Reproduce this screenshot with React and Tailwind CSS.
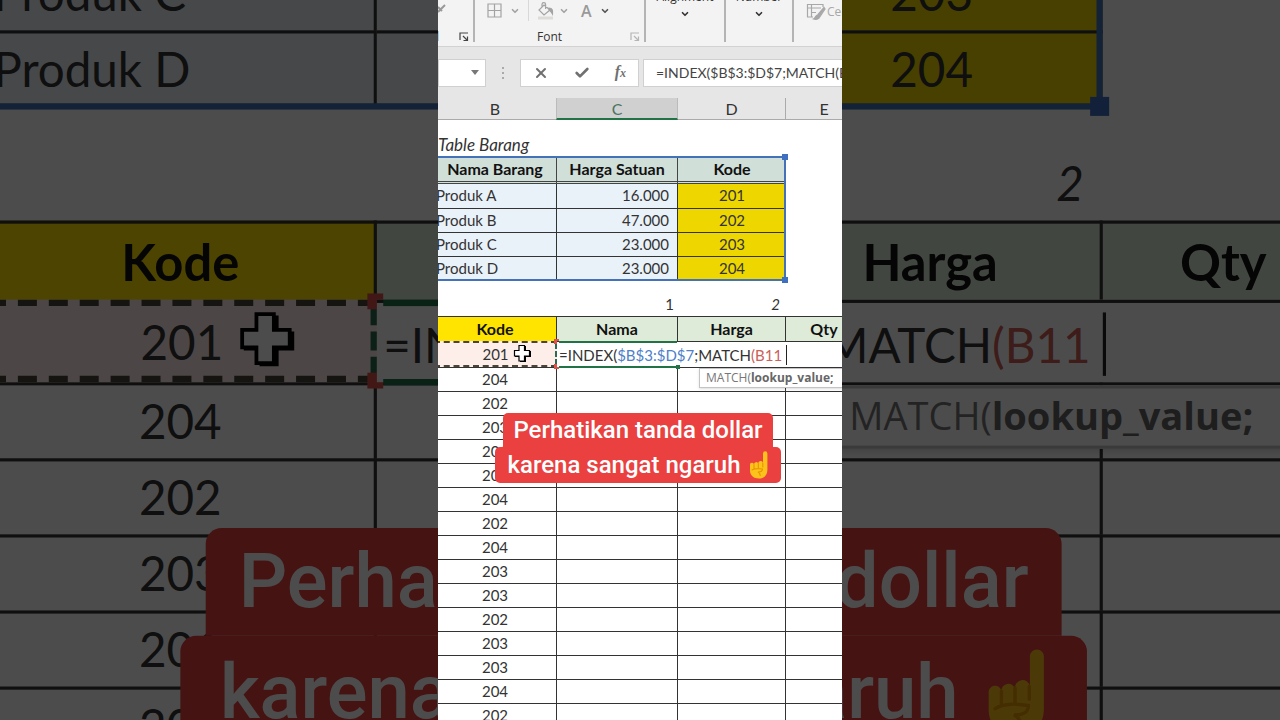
import React from 'react';
import { ChevronDown, Check, X } from 'lucide-react';

const products = [
    { name: 'Produk A', price: '16.000', code: '201' },
    { name: 'Produk B', price: '47.000', code: '202' },
    { name: 'Produk C', price: '23.000', code: '203' },
    { name: 'Produk D', price: '23.000', code: '204' },
];

const orderCodes = ['204', '202', '203', '201', '202', '204', '202', '204', '203', '203', '202', '203', '203', '204', '202'];

const Columns = () => (
    <colgroup>
        <col className="w-[123px]" />
        <col className="w-[121px]" />
        <col className="w-[108px]" />
        <col className="w-[76px]" />
    </colgroup>
);

// --- Icons ---
const Launcher = ({ className }) => (
    <svg viewBox="0 0 10 10" className={`w-[10px] h-[10px] ${className}`} fill="none" stroke="currentColor">
        <path d="M1 8V1h8M4 4l4 4M8.5 4.5v4h-4" strokeWidth="1.2" />
    </svg>
);

const BordersIcon = () => (
    <svg viewBox="0 0 15 15" className="w-[15px] h-[15px]" fill="none" stroke="#a3a3a3" strokeWidth="1.2">
        <path d="M1 1h13v13H1zM7.5 1v13M1 7.5h13" />
    </svg>
);

const BucketIcon = () => (
    <svg viewBox="0 0 18 18" className="w-[18px] h-[18px]" fill="none" stroke="#a3a3a3" strokeWidth="1.2">
        <path d="M7 3l6 5-6 5-5-5zM5 6V2.5a1.8 1.8 0 0 1 3.6 0V7" />
        <path d="M12 6c3 0 4 2 3.5 6-1-2-1.5-3-3.5-4z" fill="#a3a3a3" />
        <path d="M1 16h15" stroke="#dedcd8" strokeWidth="3" />
    </svg>
);

const CellStylesIcon = () => (
    <svg viewBox="0 0 20 18" className="w-[20px] h-[18px]" fill="none" stroke="#a8a8a8" strokeWidth="1.2">
        <path d="M17 4V1.5H1.5V14H7M1.5 5H15M5.5 1.5V14M5.5 9.5H10" />
        <path d="M18 4.5l-6 7 2 2 5-7.5zM11.5 12c-2 0-1.5 3-4 4 3 1 6 0 6-2.5z" fill="#a8a8a8" />
    </svg>
);

const PlusCursor = () => (
    <svg viewBox="0 0 18 19" className="w-[18px] h-[19px]">
        <path d="M7 2h6v5h5v6h-5v5H7v-5H2V7h5z" fill="#000" />
        <path d="M6 1.5h5.5v5h5V12h-5v5H6v-5H1.5V6.5H6z" fill="#fff" stroke="#000" strokeWidth="1.2" />
    </svg>
);

const PointingUp = () => (
    <svg viewBox="0 0 20 28" className="w-[20px] h-[28px]" role="img" aria-label="jari menunjuk ke atas">
        <path d="M14 2.5a2.2 2.2 0 0 1 4.4 0V19c0 5-3 8.5-8.5 8.5S1 24 1 19.5V14a2 2 0 0 1 4-.5 2.2 2.2 0 0 1 4.3-.8A2.3 2.3 0 0 1 14 12z" fill="#fcc21b" />
        <path d="M5 13.5V18M9.3 12.5V17M13.8 12v4M3 19c3-2 7-1.5 10.500-1 0 2.5-2 3-4.5 3 1.500.8 2.2 2 2.2 3.5" fill="none" stroke="#e59600" strokeWidth="1.1" strokeLinecap="round" />
    </svg>
);

// --- Top of the window ---
const Ribbon = () => (
    <div className="flex h-[47px] bg-[#f3f3f3] border-b border-[#d2d2d2] font-['Open_Sans',sans-serif] text-[12px] leading-4 text-[#333]">
        <div className="relative w-[37px] h-[42px] shrink-0 border-r-2 border-[#b4b4b4]">
            <svg viewBox="0 0 8 10" className="w-2 h-[10px] mt-1" stroke="#999" strokeWidth="2">
                <path d="M0 8l7-7M0 3l4 4" />
            </svg>
            <span className="absolute right-[34px] bottom-[-3px]">Clipboard</span>
            <button type="button" aria-label="Clipboard settings" className="absolute right-1 bottom-0"><Launcher className="text-[#444]" /></button>
        </div>
        <div className="relative w-[171px] h-[42px] shrink-0 border-r-2 border-[#b4b4b4]">
            <div className="flex items-center h-[21px] pl-3">
                <button type="button" aria-label="Borders" className="flex items-center gap-2">
                    <BordersIcon /><ChevronDown className="w-[10px] h-[10px] text-[#a3a3a3]" strokeWidth={4} />
                </button>
                <div className="w-px h-full ml-2 mr-2 bg-[#d8d8d8]" />
                <button type="button" aria-label="Fill colour" className="flex items-center gap-1">
                    <BucketIcon /><ChevronDown className="w-[10px] h-[10px] text-[#a3a3a3]" strokeWidth={4} />
                </button>
                <button type="button" aria-label="Font colour" className="flex items-center gap-2 ml-3 text-[16px] font-semibold text-[#999]">
                    A<ChevronDown className="w-[10px] h-[10px] text-[#555]" strokeWidth={4} />
                </button>
            </div>
            <p className="pt-2 pr-5 text-center">Font</p>
            <button type="button" aria-label="Font settings" className="absolute right-1 bottom-0"><Launcher className="text-[#b5b5b5]" /></button>
        </div>
        <button type="button" className="flex flex-col items-center w-20 h-[42px] shrink-0 border-r-2 border-[#b4b4b4]">
            <span className="-mt-[11px]">Alignment</span>
            <ChevronDown className="w-[10px] h-[10px] mt-1" strokeWidth={4} />
        </button>
        <button type="button" className="flex flex-col items-center w-[68px] h-[42px] shrink-0 border-r-2 border-[#b4b4b4]">
            <span className="-mt-[11px]">Number</span>
            <ChevronDown className="w-[10px] h-[10px] mt-1" strokeWidth={4} />
        </button>
        <button type="button" className="flex items-center gap-px h-6 pl-3 whitespace-nowrap text-[#a8a8a8]">
            <CellStylesIcon />Cell Styles
        </button>
    </div>
);

const FormulaBar = () => (
    <div className="flex items-center h-[51px] bg-[#e6e6e6]">
        <button type="button" aria-label="Name box" className="flex items-center justify-end w-12 h-7 shrink-0 pr-[6px] bg-white border border-[#d0d0d0]">
            <span className="border-x-4 border-t-[5px] border-x-transparent border-t-[#777]" />
        </button>
        <div className="flex flex-col items-center gap-[3px] w-[34px] shrink-0">
            <span className="w-[2px] h-[2px] bg-[#aaa]" />
            <span className="w-[2px] h-[2px] bg-[#aaa]" />
            <span className="w-[2px] h-[2px] bg-[#aaa]" />
        </div>
        <div className="flex items-center justify-between w-[119px] h-7 shrink-0 px-3 bg-white border border-[#d0d0d0] text-[#707070]">
            <button type="button" aria-label="Cancel"><X className="w-4 h-4" strokeWidth={3} /></button>
            <button type="button" aria-label="Enter"><Check className="w-4 h-4" strokeWidth={4} /></button>
            <button type="button" aria-label="Insert function" className="font-['Liberation_Serif',serif] text-[16px] leading-4 italic font-bold">f<span className="text-[12px]">x</span></button>
        </div>
        <input
            aria-label="Formula"
            readOnly
            value="=INDEX($B$3:$D$7;MATCH(B11"
            className="w-[240px] h-7 shrink-0 ml-1 pl-3 bg-white border border-[#d0d0d0] text-[14px] text-[#444] outline-none"
        />
    </div>
);

const ColumnHeaders = () => (
    <div className="flex w-[428px] h-[22px] -ml-1 bg-[#e6e6e6] text-[16px] leading-[22px] text-center text-[#333]">
        <div className="w-[122px] border-b border-[#aaa]">B</div>
        <div className="w-[122px] bg-[#d0d0d0] border-b-2 border-x border-x-[#bbb] border-b-[#217346] text-[#4b7360]">C</div>
        <div className="w-[108px] border-b border-r border-[#aaa]">D</div>
        <div className="w-[76px] border-b border-[#aaa]">E</div>
    </div>
);

// --- Tables ---
const ProductTable = () => (
    <div className="relative w-[352px] -ml-1">
        <table className="w-full table-fixed border-separate border-spacing-0 text-[#333]">
            <colgroup>
                <col className="w-[123px]" />
                <col className="w-[121px]" />
                <col className="w-[108px]" />
            </colgroup>
            <thead>
                <tr className="h-[27px] bg-[#d1dfd9] text-[16px] text-[#111]">
                    <th className="p-0 border-r border-b-3 border-double border-[#444]">Nama Barang</th>
                    <th className="p-0 border-r border-b-3 border-double border-[#444]">Harga Satuan</th>
                    <th className="p-0 border-b-3 border-double border-[#444]">Kode</th>
                </tr>
            </thead>
            <tbody>
                {products.map((p, i) => (
                    <tr key={p.code} className={`h-6 ${i > 0 ? '[&>td]:border-t' : ''}`}>
                        <td className="pt-0 pb-[2px] pl-[2px] pr-0 bg-[#e9f1f9] border-r border-[#333]">{p.name}</td>
                        <td className="pt-0 pb-[2px] pl-0 pr-2 bg-[#e9f1f9] border-r border-[#333] text-right">{p.price}</td>
                        <td className="p-0 pb-[2px] bg-[#eed700] border-[#333] text-center">{p.code}</td>
                    </tr>
                ))}
            </tbody>
        </table>
        {/* Highlighted range B3:D7 */}
        <div className="absolute -inset-y-px inset-x-0 border-2 border-[#4472b8]">
            <span className="absolute -top-1 -right-1 w-[6px] h-[6px] bg-[#3f6fbf]" />
            <span className="absolute -bottom-1 -right-1 w-[6px] h-[6px] bg-[#3f6fbf]" />
        </div>
    </div>
);

const OrderTable = () => (
    <table className="w-[428px] -ml-1 table-fixed border-separate border-spacing-0 text-[#333]">
        <Columns />
        <thead>
            <tr className="h-[25px] bg-[#deebd9] text-[16px] text-[#111]">
                <th className="p-0 pb-px bg-[#ffe400] border-t border-r border-[#333]">Kode</th>
                <th className="p-0 pb-px border-t border-r border-[#333]">Nama</th>
                <th className="p-0 pb-px border-t border-r border-[#333]">Harga</th>
                <th className="p-0 pb-px border-t border-[#333]">Qty</th>
            </tr>
        </thead>
        <tbody>
            <tr className="h-[26px]">
                <td className="relative p-0 bg-[#fdeeea] border-y-2 border-dashed border-[#4a4438] text-center">
                    201
                    <span className="absolute left-[79px] top-px"><PlusCursor /></span>
                    <span className="absolute right-0 inset-y-0 border-r-2 border-dashed border-[#2c6b52]" />
                    <span className="absolute -right-[2px] -top-1 w-[5px] h-[5px] bg-[#d9534a]" />
                    <span className="absolute -right-[2px] -bottom-1 w-[5px] h-[5px] bg-[#d9534a]" />
                </td>
                <td colSpan={3} className="relative py-0 pl-[2px] pr-0 bg-white border-t border-[#333] whitespace-nowrap">
                    <div className="flex items-center">
                        <span>=INDEX(<span className="text-[#4f7fc9]">$B$3:$D$7</span>;MATCH<span className="text-[#cc6058]">(B11</span></span>
                        <span className="w-px h-5 ml-1 bg-[#222]" />
                    </div>
                    <span className="absolute left-[2px] -top-px -bottom-px w-[118px] border-y-2 border-[#217346]" />
                    <span className="absolute left-[119px] -bottom-[2px] w-1 h-1 bg-[#217346]" />
                    {/* Argument hint */}
                    <div className="absolute left-[142px] top-[26px] z-10 w-[200px] h-5 pl-[6px] bg-white border border-[#c4c4c4] shadow-sm font-['Open_Sans',sans-serif] text-[12px] leading-[18px] text-[#777]">
                        MATCH(<b className="text-[#666]">lookup_value;</b>
                    </div>
                </td>
            </tr>
            {orderCodes.map((code, i) => (
                <tr key={i} className="h-6">
                    <td className="p-0 pb-[2px] border-t border-r border-[#333] text-center">{code}</td>
                    <td className="p-0 border-t border-r border-[#333]" />
                    <td className="p-0 border-t border-r border-[#333]" />
                    <td className="p-0 border-t border-[#333]" />
                </tr>
            ))}
        </tbody>
    </table>
);

const Caption = () => (
    <div className="absolute inset-x-0 top-[413px] z-20 flex flex-col items-center pr-1 font-['Roboto',sans-serif] text-[24px] font-medium text-white whitespace-nowrap">
        <p className="h-[34px] px-[10px] leading-[34px] rounded-t-[5px] bg-[#ea4040]">Perhatikan tanda dollar</p>
        <p className="flex items-center gap-2 h-9 px-3 leading-9 rounded-[5px] bg-[#ea4040]">karena sangat ngaruh<PointingUp /></p>
    </div>
);

const Frame = () => (
    <div className="relative w-full max-w-[404px] h-screen shrink-0 overflow-hidden bg-white font-['Lato',sans-serif] text-[15px] leading-5">
        <Ribbon />
        <FormulaBar />
        <ColumnHeaders />
        <p className="h-[37px] pt-[15px] text-[17px] italic text-[#333]">Table Barang</p>
        <ProductTable />
        <div className="flex w-[352px] h-9 -ml-1 pt-[14px] text-right text-[#333]">
            <span className="w-[244px] pr-1">1</span>
            <span className="w-[108px] pr-[6px] italic">2</span>
        </div>
        <OrderTable />
        <Caption />
    </div>
);

const App = () => {
    return (
        <div className="relative h-screen overflow-hidden bg-black">
            {/* Enlarged, dimmed copy of the frame fills both sides */}
            <div aria-hidden="true" inert className="absolute inset-0 flex justify-center scale-[3.17]">
                <Frame />
            </div>
            <div className="absolute inset-0 bg-black/70" />
            <main className="relative flex justify-center">
                <Frame />
            </main>
        </div>
    );
};

export default App;
